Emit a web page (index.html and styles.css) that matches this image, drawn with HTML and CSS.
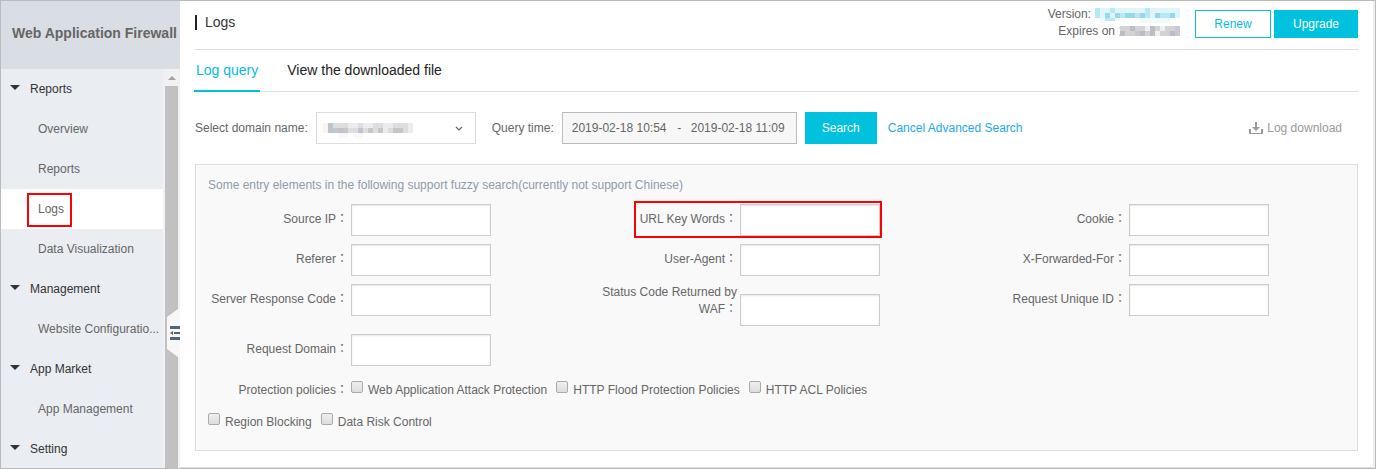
FILE: index.html
```html
<!DOCTYPE html>
<html lang="en">
<head>
    <meta charset="UTF-8">
    <meta name="viewport" content="width=device-width, initial-scale=1.0">
    <title>Web Application Firewall - Logs</title>
    <link rel="stylesheet" href="styles.css">
</head>
<body>
    <div class="app">
        <aside class="sidebar">
            <h1 class="sidebar-title">Web Application Firewall</h1>
            <div class="sidebar-body">
                <nav class="menu">
                    <a href="#" class="menu-group"><svg class="caret" width="10" height="5" viewBox="0 0 10 5"><path d="M0 0h10L5 5z"/></svg>Reports</a>
                    <a href="#" class="menu-item">Overview</a>
                    <a href="#" class="menu-item">Reports</a>
                    <a href="#" class="menu-item active">Logs</a>
                    <a href="#" class="menu-item">Data Visualization</a>
                    <a href="#" class="menu-group"><svg class="caret" width="10" height="5" viewBox="0 0 10 5"><path d="M0 0h10L5 5z"/></svg>Management</a>
                    <a href="#" class="menu-item">Website Configuratio...</a>
                    <a href="#" class="menu-group"><svg class="caret" width="10" height="5" viewBox="0 0 10 5"><path d="M0 0h10L5 5z"/></svg>App Market</a>
                    <a href="#" class="menu-item">App Management</a>
                    <a href="#" class="menu-group"><svg class="caret" width="10" height="5" viewBox="0 0 10 5"><path d="M0 0h10L5 5z"/></svg>Setting</a>
                </nav>
                <div class="scrollbar">
                    <svg class="scroll-up" width="8" height="4" viewBox="0 0 8 4"><path d="M4 0l4 4H0z"/></svg>
                    <div class="scroll-thumb"></div>
                </div>
            </div>
            <button class="collapse" type="button" aria-label="Collapse menu">
                <svg width="13" height="48" viewBox="0 0 13 48">
                    <path fill="#f7f7f7" d="M0 8L11 0H13V48H11L0 40z"/>
                    <path fill="#546478" d="M3 17h10v3H3zM7 23h6v2H7zM3 28h10v3H3zM3 24l3-2v4z"/>
                </svg>
            </button>
        </aside>

        <main class="content">
            <header class="page-header">
                <h2 class="page-title">Logs</h2>
                <div class="header-right">
                    <div class="version">
                        <div class="version-line">Version:
                            <svg class="mask" width="85" height="17" viewBox="0 0 85 17" shape-rendering="crispEdges">
                                <path fill="#dff5fa" d="M0 2h85v10H0z"/>
                                <path fill="#b8e8f4" d="M0 2h5v10H0zM15 2h5v5h-5zM25 7h5v5h-5zM40 7h5v5h-5zM50 2h5v10h-5zM65 7h10v5H65zM10 12h10v3H10z"/>
                                <path fill="#8fdcef" d="M10 7h5v5h-5zM30 7h5v5h-5zM75 7h5v5h-5z"/>
                                <path fill="#9fd3ea" d="M20 7h5v5h-5zM35 7h5v5h-5zM45 7h5v5h-5zM60 7h5v5h-5z"/>
                                <path fill="#eefafc" d="M5 12h5v5H5zM20 12h5v3h-5zM45 12h30v5H45z"/>
                            </svg>
                        </div>
                        <div class="version-line">Expires on
                            <svg class="mask" width="61" height="17" viewBox="0 0 61 17" shape-rendering="crispEdges">
                                <path fill="#d3d3d6" d="M1 3h60v10H1z"/>
                                <path fill="#bdbdc1" d="M1 8h5v5H1zM11 3h5v5h-5zM21 8h5v5h-5zM31 3h5v10h-5zM51 8h5v5h-5z"/>
                                <path fill="#eef0f4" d="M26 3h5v5h-5zM36 8h5v5h-5zM41 3h5v5h-5z"/>
                                <path fill="#c4c9d6" d="M56 3h5v10h-5zM16 8h5v5h-5z"/>
                                <path fill="#f5dfb5" d="M0 4h1v2H0zM0 11h1v2H0z"/>
                            </svg>
                        </div>
                    </div>
                    <div class="header-actions">
                        <button type="button" class="btn btn-outline">Renew</button>
                        <button type="button" class="btn btn-upgrade">Upgrade</button>
                    </div>
                </div>
            </header>

            <div class="tabs">
                <a href="#" class="tab active">Log query</a>
                <a href="#" class="tab">View the downloaded file</a>
            </div>

            <form class="query">
                <div class="filter-bar">
                    <label for="domain" class="domain-label">Select domain name:</label>
                    <div class="select-wrap">
                        <select id="domain"><option></option></select>
                        <svg class="domain-mask" width="90" height="15" viewBox="0 0 90 15" shape-rendering="crispEdges">
                            <path fill="#fdf3e6" d="M0 0h5v10H0z"/>
                            <path fill="#dddde0" d="M5 0h10v10H5zM15 0h75v10H15z"/>
                            <path fill="#bfc3d0" d="M5 0h5v10H5zM15 5h5v5h-5zM35 5h5v5h-5z"/>
                            <path fill="#c6c6c8" d="M10 5h5v5h-5zM20 5h5v5h-5zM45 5h5v5h-5zM55 5h5v5h-5zM70 5h10v5H70z"/>
                            <path fill="#ececf0" d="M25 0h10v5H25zM40 0h10v5H40zM60 0h5v10h-5zM65 0h5v5h-5zM85 0h5v10h-5z"/>
                            <path fill="#f8f8f9" d="M15 10h10v5H15zM30 10h10v5H30z"/>
                        </svg>
                        <svg class="chevron" width="8" height="5" viewBox="0 0 8 5"><path d="M1 1l3 3 3-3" fill="none" stroke="#666" stroke-width="1.2"/></svg>
                    </div>
                    <label for="startTime" class="time-label">Query time:</label>
                    <div class="time-range">
                        <input type="text" id="startTime" value="2019-02-18 10:54">
                        <span class="time-sep">-</span>
                        <input type="text" id="endTime" value="2019-02-18 11:09" aria-label="End time">
                    </div>
                    <button type="button" class="btn btn-search">Search</button>
                    <a href="#" class="cancel-link">Cancel Advanced Search</a>
                    <a href="#" class="download-link">
                        <svg width="14" height="13" viewBox="0 0 14 13"><path fill="#999" d="M6 0h2v5h3L7 9 3 5h3zM0 7h2v4h10V7h2v5H0z"/></svg>
                        Log download
                    </a>
                </div>

                <div class="panel">
                    <p class="hint">Some entry elements in the following support fuzzy search(currently not support Chinese)</p>
                    <div class="fields">
                        <div class="field"><label for="sourceIp">Source IP：</label><input type="text" id="sourceIp"></div>
                        <div class="field marked"><label for="urlKey">URL Key Words：</label><input type="text" id="urlKey"></div>
                        <div class="field"><label for="cookie">Cookie：</label><input type="text" id="cookie"></div>
                        <div class="field"><label for="referer">Referer：</label><input type="text" id="referer"></div>
                        <div class="field"><label for="userAgent">User-Agent：</label><input type="text" id="userAgent"></div>
                        <div class="field"><label for="forwarded">X-Forwarded-For：</label><input type="text" id="forwarded"></div>
                        <div class="field"><label for="serverCode">Server Response Code：</label><input type="text" id="serverCode"></div>
                        <div class="field"><label for="wafCode">Status Code Returned by WAF：</label><input type="text" id="wafCode"></div>
                        <div class="field"><label for="requestId">Request Unique ID：</label><input type="text" id="requestId"></div>
                        <div class="field"><label for="requestDomain">Request Domain：</label><input type="text" id="requestDomain"></div>
                    </div>
                    <div class="policies">
                        <span class="policies-label">Protection policies：</span>
                        <label class="check"><input type="checkbox">Web Application Attack Protection</label>
                        <label class="check"><input type="checkbox">HTTP Flood Protection Policies</label>
                        <label class="check"><input type="checkbox">HTTP ACL Policies</label>
                    </div>
                    <div class="policies">
                        <label class="check"><input type="checkbox">Region Blocking</label>
                        <label class="check"><input type="checkbox">Data Risk Control</label>
                    </div>
                </div>
            </form>
        </main>
    </div>
</body>
</html>
```

FILE: styles.css
```css
/* Base */
*, *::before, *::after {
    margin: 0;
    padding: 0;
    box-sizing: border-box;
}

body {
    font-family: "Liberation Sans", Arial, "Noto Sans CJK JP", sans-serif;
    font-size: 12px;
    line-height: 17px;
    color: #666;
    background: #fff;
}

a {
    color: inherit;
    text-decoration: none;
}

input, select, button {
    font: inherit;
    color: inherit;
}

svg {
    display: block;
}

.app {
    display: flex;
    height: 100vh;
    border: 1px solid #bbb;
}

/* Sidebar */
.sidebar {
    position: relative;
    display: flex;
    flex-direction: column;
    flex: 0 0 179px;
    background: #eaedf1;
}

.sidebar-title {
    flex: 0 0 68px;
    padding-left: 11px;
    font-size: 14px;
    line-height: 64px;
    white-space: nowrap;
    background: #d9dde4;
}

.sidebar-body {
    display: flex;
    flex: 1;
    min-height: 0;
    overflow: hidden;
}

.menu {
    flex: 1;
}

.menu-group, .menu-item {
    display: flex;
    align-items: center;
    height: 40px;
    white-space: nowrap;
}

.menu-group {
    gap: 10px;
    padding-left: 9px;
    color: #333;
}

.menu-item {
    padding-left: 37px;
}

.menu-item.active {
    position: relative;
    background: #fff;
}

.menu-item.active::after {
    content: "";
    position: absolute;
    left: 26px;
    top: 4px;
    width: 45px;
    height: 34px;
    border: 2px solid #f00;
}

.caret {
    margin-bottom: 4px;
    fill: #333;
}

.scrollbar {
    display: flex;
    flex-direction: column;
    flex: 0 0 17px;
    padding: 0 2px;
    background: #f1f1f1;
}

.scroll-up {
    margin: 7px auto 6px;
    fill: #a3a3a3;
}

.scroll-thumb {
    flex: 1;
    background: #c1c1c1;
}

.collapse {
    position: absolute;
    right: 0;
    top: 308px;
    border: none;
    background: none;
}

/* Page header */
.content {
    flex: 1;
    min-width: 0;
    padding: 0 15px;
    border-right: 2px solid #eee;
    border-bottom: 1px solid #ddd;
}

.page-header {
    display: flex;
    justify-content: space-between;
    align-items: flex-start;
    height: 49px;
    border-bottom: 1px solid #ddd;
}

.page-title {
    margin-top: 14px;
    padding-left: 8px;
    border-left: 2px solid #222;
    font-size: 14px;
    font-weight: normal;
    line-height: 15px;
    color: #333;
}

.header-right {
    display: flex;
    gap: 15px;
}

.version {
    padding-top: 5px;
}

.version-line {
    display: flex;
    justify-content: flex-end;
    gap: 4px;
}

.header-actions {
    display: flex;
    gap: 3px;
    padding-top: 9px;
}

.btn {
    height: 28px;
    border: 1px solid #00c1de;
    color: #fff;
    background: #00c1de;
}

.btn-outline {
    width: 76px;
    color: #00c1de;
    background: #fff;
}

.btn-upgrade {
    width: 84px;
}

/* Tabs */
.tabs {
    display: flex;
    gap: 25px;
    height: 42px;
    margin-left: -1px;
    border-bottom: 1px solid #ddd;
}

.tab {
    height: 42px;
    padding: 0 2px;
    font-size: 14px;
    line-height: 40px;
    color: #222;
}

.tab.active {
    border-bottom: 2px solid #00c1de;
    color: #00c1de;
}

/* Filter bar */
.filter-bar {
    display: flex;
    align-items: center;
    margin: 20px 0;
    padding-right: 16px;
}

.select-wrap {
    position: relative;
    width: 160px;
    margin: 0 16px 0 8px;
}

.select-wrap select {
    display: block;
    width: 100%;
    height: 32px;
    border: 1px solid #ddd;
    border-radius: 0;
    background: #fff;
    appearance: none;
}

.domain-mask {
    position: absolute;
    left: 7px;
    top: 11px;
    pointer-events: none;
}

.chevron {
    position: absolute;
    right: 13px;
    top: 14px;
    pointer-events: none;
}

.time-range {
    display: flex;
    align-items: center;
    width: 235px;
    height: 32px;
    margin: 0 8px;
    padding: 0 9px;
    border: 1px solid #bbb;
    background: #f7f7f7;
}

.time-range input {
    width: 96px;
    border: none;
    background: none;
}

.time-sep {
    flex: 1;
    text-align: center;
}

.btn-search {
    width: 72px;
    height: 32px;
    margin-right: 11px;
}

.cancel-link {
    color: #1ca8f0;
}

.download-link {
    display: flex;
    align-items: center;
    gap: 4px;
    margin-left: auto;
    color: #999;
}

/* Advanced search */
.panel {
    padding: 12px;
    border: 1px solid #ddd;
    background: #f9f9f9;
}

.hint {
    margin-bottom: 10px;
    color: #8f9bab;
}

.fields {
    display: grid;
    grid-template-columns: repeat(3, 1fr);
    gap: 8px 30px;
    align-items: start;
    margin-bottom: 8px;
}

.field {
    position: relative;
    display: flex;
    align-items: flex-end;
    gap: 3px;
}

.field label {
    width: 140px;
    padding-bottom: 8px;
    text-align: right;
}

.field input {
    width: 140px;
    height: 32px;
    padding: 0 8px;
    border: 1px solid #ccc;
    background: #fff;
    box-shadow: inset 0 1px 2px rgba(0, 0, 0, 0.1);
}

.field.marked::after {
    content: "";
    position: absolute;
    left: 37px;
    top: -3px;
    width: 248px;
    height: 37px;
    border: 2px solid #f00;
    pointer-events: none;
}

.policies {
    display: flex;
    align-items: center;
    gap: 9px;
    height: 32px;
}

.policies-label {
    width: 140px;
    margin-right: -6px;
    text-align: right;
}

.check {
    display: flex;
    align-items: center;
    gap: 5px;
}

.check input {
    width: 12px;
    height: 12px;
    margin-bottom: 6px;
    border: 1px solid #aaa;
    border-radius: 2px;
    background: linear-gradient(#eee, #ddd);
    appearance: none;
}
```
